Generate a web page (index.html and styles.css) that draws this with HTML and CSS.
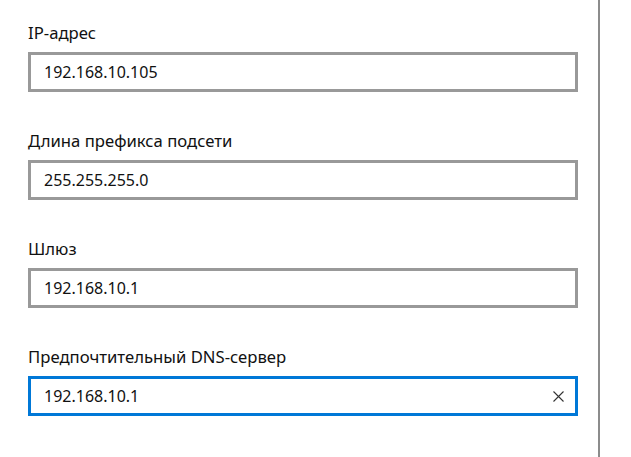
FILE: index.html
```html
<!DOCTYPE html>
<html lang="ru">
<head>
<meta charset="utf-8">
<link rel="stylesheet" href="styles.css">
</head>
<body>
<div class="page">
  <div class="panel">
    <div class="field">
      <div class="label">IP-адрес</div>
      <div class="box"><span class="value">192.168.10.105</span></div>
    </div>
    <div class="field">
      <div class="label">Длина префикса подсети</div>
      <div class="box"><span class="value">255.255.255.0</span></div>
    </div>
    <div class="field">
      <div class="label">Шлюз</div>
      <div class="box"><span class="value">192.168.10.1</span></div>
    </div>
    <div class="field">
      <div class="label">Предпочтительный DNS-сервер</div>
      <div class="box focused"><span class="value">192.168.10.1</span>
        <svg class="clear" width="11" height="11" viewBox="0 0 11 11"><path d="M0.5 0.5 L10.5 10.5 M10.5 0.5 L0.5 10.5" stroke="#333" stroke-width="1.1" fill="none"/></svg>
      </div>
    </div>
  </div>
</div>
</body>
</html>
```
FILE: styles.css
```css
html, body {
  margin: 0;
  padding: 0;
  background: #fff;
}
.page {
  display: flex;
  height: 457px;
  font-family: "Noto Sans", sans-serif;
  color: #000;
}
.panel {
  width: 570px;
  padding: 23px 0 0 28px;
  border-right: 2px solid #8c8c8c;
  box-sizing: content-box;
}
.field {
  width: 550px;
  margin-bottom: 39px;
}
.label {
  font-size: 16.7px;
  line-height: 20px;
  margin-bottom: 9px;
  color: #111;
}
.box {
  height: 40px;
  box-sizing: border-box;
  border: 3px solid #999;
  display: flex;
  align-items: center;
  padding: 0 13px 0 13px;
  font-size: 16px;
  color: #111;
}
.box.focused {
  border-color: #0078d7;
}
.value {
  flex: 1;
}
.clear {
  display: block;
  margin-right: -2px;
}
```
